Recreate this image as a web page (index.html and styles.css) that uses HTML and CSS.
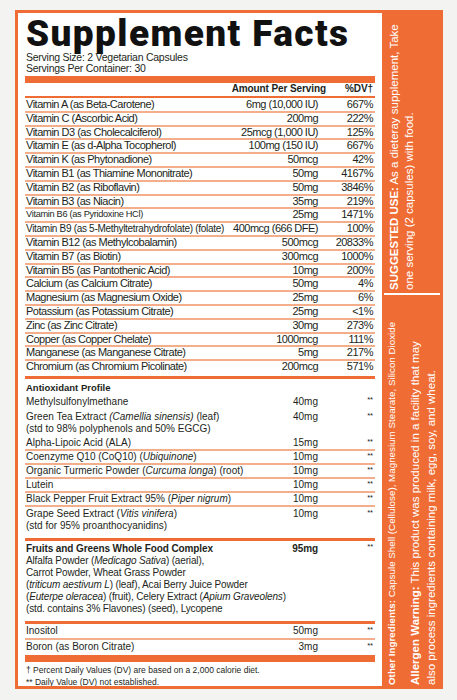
FILE: index.html
```html
<!DOCTYPE html>
<html lang="en">
<head>
    <meta charset="UTF-8">
    <meta name="viewport" content="width=device-width, initial-scale=1.0">
    <title>Supplement Facts</title>
    <link rel="stylesheet" href="styles.css">
</head>
<body>
    <div class="label">
        <div class="facts">
            <h1 class="title">Supplement Facts</h1>
            <p class="serving">Serving Size: 2 Vegetarian Capsules<br>Servings Per Container: 30</p>
            <div class="bar"></div>

            <div class="row head">
                <span></span>
                <span class="amt">Amount Per Serving</span>
                <span class="dv">%DV&dagger;</span>
            </div>

            <div class="vitamins">
                <div class="row"><span>Vitamin A (as Beta-Carotene)</span><span class="amt">6mg (10,000 IU)</span><span class="dv">667%</span></div>
                <div class="row"><span>Vitamin C (Ascorbic Acid)</span><span class="amt">200mg</span><span class="dv">222%</span></div>
                <div class="row"><span>Vitamin D3 (as Cholecalciferol)</span><span class="amt">25mcg (1,000 IU)</span><span class="dv">125%</span></div>
                <div class="row"><span>Vitamin E (as d-Alpha Tocopherol)</span><span class="amt">100mg (150 IU)</span><span class="dv">667%</span></div>
                <div class="row"><span>Vitamin K (as Phytonadione)</span><span class="amt">50mcg</span><span class="dv">42%</span></div>
                <div class="row"><span>Vitamin B1 (as Thiamine Mononitrate)</span><span class="amt">50mg</span><span class="dv">4167%</span></div>
                <div class="row"><span>Vitamin B2 (as Riboflavin)</span><span class="amt">50mg</span><span class="dv">3846%</span></div>
                <div class="row"><span>Vitamin B3 (as Niacin)</span><span class="amt">35mg</span><span class="dv">219%</span></div>
                <div class="row"><span class="tight b6">Vitamin B6 (as Pyridoxine HCl)</span><span class="amt">25mg</span><span class="dv">1471%</span></div>
                <div class="row"><span class="tight">Vitamin B9 (as 5-Methyltetrahydrofolate) (folate)</span><span class="amt">400mcg (666 DFE)</span><span class="dv">100%</span></div>
                <div class="row"><span>Vitamin B12 (as Methylcobalamin)</span><span class="amt">500mcg</span><span class="dv">20833%</span></div>
                <div class="row"><span>Vitamin B7 (as Biotin)</span><span class="amt">300mcg</span><span class="dv">1000%</span></div>
                <div class="row"><span>Vitamin B5 (as Pantothenic Acid)</span><span class="amt">10mg</span><span class="dv">200%</span></div>
                <div class="row"><span>Calcium (as Calcium Citrate)</span><span class="amt">50mg</span><span class="dv">4%</span></div>
                <div class="row"><span>Magnesium (as Magnesium Oxide)</span><span class="amt">25mg</span><span class="dv">6%</span></div>
                <div class="row"><span>Potassium (as Potassium Citrate)</span><span class="amt">25mg</span><span class="dv">&lt;1%</span></div>
                <div class="row"><span>Zinc (as Zinc Citrate)</span><span class="amt">30mg</span><span class="dv">273%</span></div>
                <div class="row"><span>Copper (as Copper Chelate)</span><span class="amt">1000mcg</span><span class="dv">111%</span></div>
                <div class="row"><span>Manganese (as Manganese Citrate)</span><span class="amt">5mg</span><span class="dv">217%</span></div>
                <div class="row"><span>Chromium (as Chromium Picolinate)</span><span class="amt">200mcg</span><span class="dv">571%</span></div>
            </div>

            <div class="rule"></div>

            <!-- antioxidants -->
            <div class="group">
                <div class="item sub-head"><b>Antioxidant Profile</b></div>
                <div class="item plain"><span>Methylsulfonylmethane</span><span class="amt">40mg</span><span class="star">**</span></div>
                <div class="item two first"><span>Green Tea Extract <i>(Camellia sinensis)</i> (leaf)<br>(std to 98% polyphenols and 50% EGCG)</span><span class="amt">40mg</span><span class="star">**</span></div>
                <div class="item"><span>Alpha-Lipoic Acid (ALA)</span><span class="amt">15mg</span><span class="star">**</span></div>
                <div class="item"><span>Coenzyme Q10 (CoQ10) (<i>Ubiquinone</i>)</span><span class="amt">10mg</span><span class="star">**</span></div>
                <div class="item"><span>Organic Turmeric Powder (<i>Curcuma longa</i>) (root)</span><span class="amt">10mg</span><span class="star">**</span></div>
                <div class="item"><span>Lutein</span><span class="amt">10mg</span><span class="star">**</span></div>
                <div class="item"><span>Black Pepper Fruit Extract 95% (<i>Piper nigrum</i>)</span><span class="amt">10mg</span><span class="star">**</span></div>
                <div class="item two last"><span>Grape Seed Extract (<i>Vitis vinifera</i>)<br>(std for 95% proanthocyanidins)</span><span class="amt">10mg</span><span class="star">**</span></div>
            </div>

            <div class="rule"></div>

            <div class="group fruits">
                <div class="item plain"><b>Fruits and Greens Whole Food Complex</b><b class="amt">95mg</b><span class="star">**</span></div>
                <p class="blend">Alfalfa Powder (<i>Medicago Sativa</i>) (aerial),<br>Carrot Powder, Wheat Grass Powder<br>(<i>triticum aestivum L</i>) (leaf), Acai Berry Juice Powder<br>(<i>Euterpe oleracea</i>) (fruit), Celery Extract (<i>Apium Graveolens</i>)<br>(std. contains 3% Flavones) (seed), Lycopene</p>
            </div>

            <div class="rule"></div>

            <div class="group minor">
                <div class="item"><span>Inositol</span><span class="amt">50mg</span><span class="star">**</span></div>
                <div class="item plain"><span>Boron (as Boron Citrate)</span><span class="amt">3mg</span><span class="star">**</span></div>
            </div>

            <div class="bar"></div>
            <p class="notes">&dagger; Percent Daily Values (DV) are based on a 2,000 calorie diet.<br>** Daily Value (DV) not established.</p>
        </div>

        <div class="panel">
            <div class="panel-use">
                <p class="vtext use-text"><b>SUGGESTED USE:</b> As a dieteray supplement, Take<br>one serving (2 capsules) with food.</p>
            </div>
            <div class="panel-other">
                <div class="vtext other-text">
                    <p class="ingr"><b>Other Ingredients:</b> Capsule Shell (Cellulose), Magnesium Stearate, Silicon Dioxide</p>
                    <p class="allergen"><b>Allergen Warning:</b> This product was produced in a facility that may<br>also process ingredients containing milk, egg, soy, and wheat.</p>
                </div>
            </div>
        </div>
    </div>
</body>
</html>
```

FILE: styles.css
```css
body {
    margin: 0;
    background-color: #f3f3f1;
    color: #231f20;
    font-family: "Liberation Sans", Arial, sans-serif;
}

.label {
    display: flex;
    box-sizing: border-box;
    width: 428px;
    height: 679px;
    margin: 10px 0 0 15px;
    border: 3px solid #ef6c34;
    border-right: 0;
    background-color: #fff;
    overflow: hidden;
}

.facts {
    flex: none;
    width: 350px;
    padding: 0 7px;
}

.title {
    margin: 2px 0 0 1px;
    font-family: Roboto, "Liberation Sans", sans-serif;
    font-weight: 900;
    font-size: 37px;
    line-height: 37px;
    letter-spacing: 1.4px;
    color: #111;
    white-space: nowrap;
}

.serving {
    margin: 0 0 0 1px;
    font-size: 10.5px;
    line-height: 11px;
    letter-spacing: -0.25px;
}

.bar {
    height: 7px;
    margin-top: 2px;
    background-color: #ef6c34;
}

.rule {
    height: 3px;
    background-color: #ef6c34;
}

/* main table */
.row {
    display: grid;
    grid-template-columns: minmax(0, 1fr) 95px 55px;
    font-size: 11px;
    line-height: 11.8px;
    letter-spacing: -0.5px;
    border-bottom: 2px solid #f5ae8b;
    white-space: nowrap;
}

.row span:first-child {
    padding-left: 1px;
}

.row .amt,
.row .dv {
    text-align: right;
    padding-right: 2px;
}

.head {
    font-weight: bold;
    font-size: 10px;
    line-height: 11px;
    letter-spacing: -0.1px;
    padding-bottom: 2px;
    border-bottom: 2px solid #ef6c34;
    margin-bottom: 1px;
}

.head .amt {
    padding-right: 0;
    margin-right: -6px;
}

.vitamins .row:last-child {
    border-bottom: 0;
    margin-bottom: 3px;
}

.tight {
    font-size: 10px;
    letter-spacing: -0.3px;
}

.tight.b6 {
    font-size: 9.2px;
}

/* lower groups */
.item {
    display: grid;
    grid-template-columns: minmax(0, 1fr) 95px 55px;
    font-size: 10px;
    line-height: 12px;
    border-bottom: 2px solid #f5ae8b;
    white-space: nowrap;
}

.item span:first-child,
.item b:first-child {
    padding-left: 1px;
}

.item .amt {
    text-align: right;
    padding-right: 2px;
}

.item .star {
    text-align: right;
    padding-right: 2px;
    font-size: 7.5px;
    line-height: 9px;
}

.item.plain,
.item.sub-head,
.item.first {
    border-bottom: 0;
}

.sub-head {
    padding-top: 2px;
    font-size: 9.5px;
    line-height: 14px;
}

.sub-head + .plain {
    line-height: 14px;
}

.two {
    line-height: 12.5px;
    padding: 2px 0 1px;
}

.two.last {
    padding: 1px 0 5px;
    border-bottom: 0;
}

.fruits .plain {
    padding-top: 1px;
    line-height: 13px;
    letter-spacing: -0.1px;
}

.blend {
    margin: 0 0 6px 1px;
    font-size: 10px;
    line-height: 12px;
    letter-spacing: -0.15px;
}

.minor .item {
    padding-top: 1px;
}

.minor .item:first-child {
    padding-bottom: 1px;
}

.notes {
    margin: 2px 0 0 1px;
    font-size: 8.5px;
    line-height: 12px;
}

/* side panel */
.panel {
    display: flex;
    flex-direction: column;
    width: 61px;
    background-color: #ef6c34;
    color: #fff;
}

.panel-use {
    display: flex;
    box-sizing: border-box;
    height: 282px;
    margin: 0 3px 0 2px;
    padding: 4px 0 3px 2.5px;
    border-bottom: 2px solid #fff;
}

.panel-other {
    display: flex;
    flex: 1;
    padding: 3px 0 1px 4px;
}

.vtext {
    margin: 0;
    writing-mode: vertical-rl;
    transform: rotate(180deg);
    text-align: justify;
    white-space: nowrap;
}

.use-text {
    font-size: 11.5px;
    line-height: 15px;
    white-space: normal;
}

.other-text p {
    margin: 0;
}

.ingr {
    font-size: 9.8px;
    line-height: 12px;
    margin-block-end: 9px !important;
}

.allergen {
    font-size: 11.5px;
    line-height: 16px;
    white-space: normal;
}
```
